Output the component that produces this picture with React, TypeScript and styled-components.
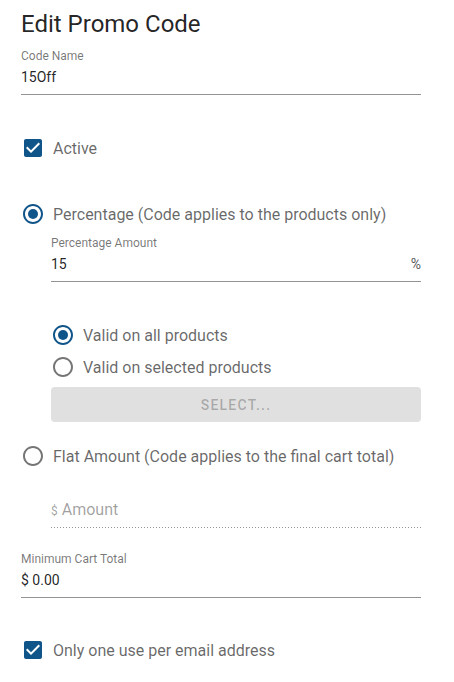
import React from 'react';
import styled, { createGlobalStyle } from 'styled-components';

const GlobalStyle = createGlobalStyle`
    body {
        margin: 0;
        background: #ffffff;
        font-family: Roboto, "Helvetica Neue", Arial, sans-serif;
    }
`;

const Form = styled.div`
    width: 400px;
    padding: 0 33px 0 21px;
    display: flex;
    flex-direction: column;
`;

const Title = styled.h1`
    margin: 8px 0 0;
    font-size: 24px;
    font-weight: 400;
    line-height: 32px;
    color: rgba(0, 0, 0, 0.87);
`;

const Field = styled.div<{ $indent?: number; $top: number }>`
    margin-top: ${(p) => p.$top}px;
    margin-left: ${(p) => p.$indent || 0}px;
    display: flex;
    flex-direction: column;
`;

const Label = styled.label`
    font-size: 12px;
    line-height: 16px;
    color: rgba(0, 0, 0, 0.54);
`;

const InputRow = styled.div<{ $disabled?: boolean }>`
    display: flex;
    align-items: baseline;
    padding: 3px 0 7px;
    font-size: 14px;
    line-height: 20px;
    color: rgba(0, 0, 0, 0.87);
    border-bottom: ${(p) => (p.$disabled ? 'none' : '1px solid rgba(0, 0, 0, 0.42)')};
    ${(p) =>
        p.$disabled &&
        `
        padding-bottom: 6px;
        background-image: linear-gradient(to right, rgba(0, 0, 0, 0.42) 33%, transparent 0%);
        background-position: left bottom;
        background-size: 3px 1px;
        background-repeat: repeat-x;
    `}
`;

const Value = styled.span`
    flex: 1;
`;

const Adornment = styled.span`
    font-size: 14px;
    color: rgba(0, 0, 0, 0.7);
`;

const Prefix = styled.span`
    font-size: 12px;
    color: rgba(0, 0, 0, 0.38);
    margin-right: 4px;
`;

const Placeholder = styled.span`
    font-size: 16px;
    line-height: 24px;
    color: rgba(0, 0, 0, 0.38);
`;

const OptionRow = styled.div<{ $indent?: number; $top: number }>`
    display: flex;
    align-items: center;
    gap: 8px;
    height: 24px;
    margin-top: ${(p) => p.$top}px;
    margin-left: ${(p) => p.$indent || 0}px;
    font-size: 16px;
    color: rgba(0, 0, 0, 0.6);
`;

const Icon = styled.svg<{ $on: boolean }>`
    width: 24px;
    height: 24px;
    flex: none;
    fill: ${(p) => (p.$on ? '#10558a' : 'rgba(0, 0, 0, 0.54)')};
`;

const SelectButton = styled.button`
    margin: 8px 0 0 30px;
    height: 35px;
    border: none;
    border-radius: 4px;
    background: #e0e0e0;
    font-family: Roboto, Arial, sans-serif;
    font-size: 14px;
    font-weight: 500;
    letter-spacing: 1.25px;
    text-transform: uppercase;
    color: rgba(0, 0, 0, 0.26);
`;

const Checkbox = () => (
    <Icon $on viewBox="0 0 24 24">
        <path d="M19 3H5c-1.11 0-2 .9-2 2v14c0 1.1.89 2 2 2h14c1.11 0 2-.9 2-2V5c0-1.1-.89-2-2-2zm-9 14l-5-5 1.41-1.41L10 14.17l7.59-7.59L19 8l-9 9z" />
    </Icon>
);

const Radio = ({ on }: { on: boolean }) => (
    <Icon $on={on} viewBox="0 0 24 24">
        <path d="M12 2C6.48 2 2 6.48 2 12s4.48 10 10 10 10-4.48 10-10S17.52 2 12 2zm0 18c-4.42 0-8-3.58-8-8s3.58-8 8-8 8 3.58 8 8-3.58 8-8 8z" />
        {on && <circle cx="12" cy="12" r="5" />}
    </Icon>
);

const App: React.FC = () => {
    return (
        <>
            <GlobalStyle />
            <Form>
                <Title>Edit Promo Code</Title>

                <Field $top={8}>
                    <Label>Code Name</Label>
                    <InputRow>
                        <Value>15Off</Value>
                    </InputRow>
                </Field>

                <OptionRow $top={41}>
                    <Checkbox />
                    Active
                </OptionRow>

                <OptionRow $top={42}>
                    <Radio on />
                    Percentage (Code applies to the products only)
                </OptionRow>

                <Field $top={9} $indent={30}>
                    <Label>Percentage Amount</Label>
                    <InputRow>
                        <Value>15</Value>
                        <Adornment>%</Adornment>
                    </InputRow>
                </Field>

                <OptionRow $top={41} $indent={30}>
                    <Radio on />
                    Valid on all products
                </OptionRow>
                <OptionRow $top={8} $indent={30}>
                    <Radio on={false} />
                    Valid on selected products
                </OptionRow>

                <SelectButton disabled>Select...</SelectButton>

                <OptionRow $top={22}>
                    <Radio on={false} />
                    Flat Amount (Code applies to the final cart total)
                </OptionRow>

                <Field $top={27} $indent={30}>
                    <InputRow $disabled>
                        <Prefix>$</Prefix>
                        <Placeholder>Amount</Placeholder>
                    </InputRow>
                </Field>

                <Field $top={23}>
                    <Label>Minimum Cart Total</Label>
                    <InputRow>
                        <Value>$ 0.00</Value>
                    </InputRow>
                </Field>

                <OptionRow $top={40}>
                    <Checkbox />
                    Only one use per email address
                </OptionRow>
            </Form>
        </>
    );
};

export default App;
